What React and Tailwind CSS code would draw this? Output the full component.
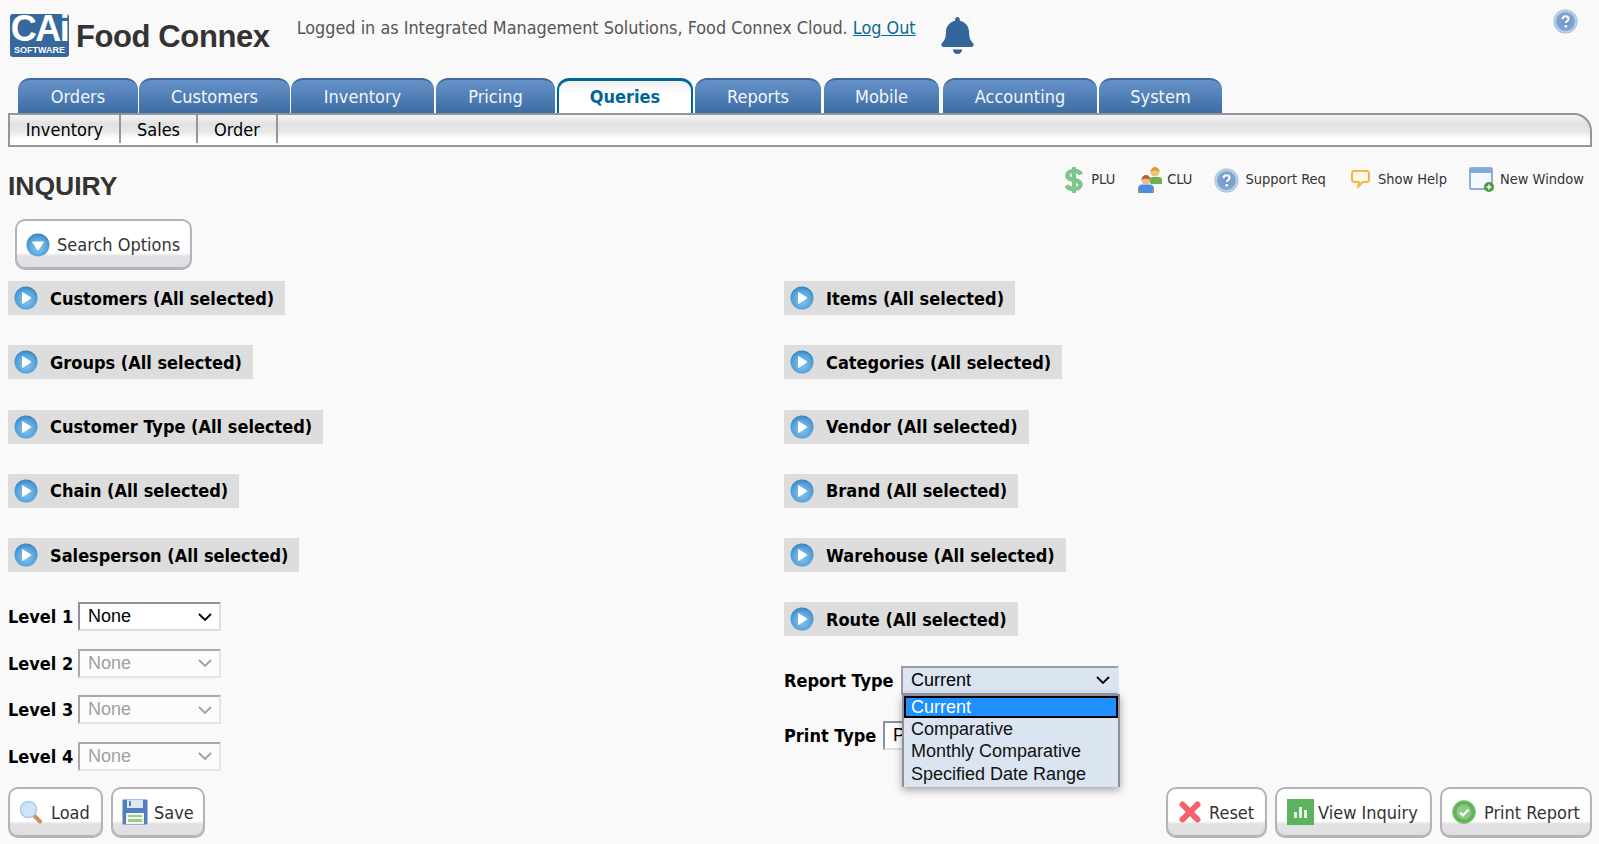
import React from 'react';
import { FaBell } from 'react-icons/fa';

const tabs = [
  { label: 'Orders', w: 'w-[120px]' },
  { label: 'Customers', w: 'ml-[1px] w-[151px]' },
  { label: 'Inventory', w: 'ml-[1px] w-[143px]' },
  { label: 'Pricing', w: 'ml-[2px] w-[119px]' },
  { label: 'Queries', w: 'ml-[2px] w-[136px]', active: true },
  { label: 'Reports', w: 'ml-[2px] w-[126px]' },
  { label: 'Mobile', w: 'ml-[3px] w-[115px]' },
  { label: 'Accounting', w: 'ml-[4px] w-[154px]' },
  { label: 'System', w: 'ml-[2px] w-[123px]' },
];

const leftFilters = ['Customers', 'Groups', 'Customer Type', 'Chain', 'Salesperson'];
const rightFilters = ['Items', 'Categories', 'Vendor', 'Brand', 'Warehouse', 'Route'];

const tahoma = "font-['DejaVu_Sans_Condensed','DejaVu_Sans',sans-serif]";

// Glossy round blue icon used by the expanders
const BlueBall = ({ size = 24, dir = 'right' }) => {
  const id = `ball-${dir}`;
  return (
    <svg width={size} height={size} viewBox="0 0 24 24" className="shrink-0">
      <defs>
        <radialGradient id={id} cx="50%" cy="60%" r="60%">
          <stop offset="0%" stopColor="#8cc8ef" />
          <stop offset="75%" stopColor="#4f9fd8" />
          <stop offset="100%" stopColor="#3b7fb5" />
        </radialGradient>
      </defs>
      <circle cx="12" cy="12" r="11.5" fill={`url(#${id})`} />
      {dir === 'right' ? (
        <path d="M8.5 6.5 L17 12 L8.5 17.5 Z" fill="#fff" stroke="#fff" strokeWidth="1" strokeLinejoin="round" />
      ) : (
        <path d="M6.5 9 L17.5 9 L12 17 Z" fill="#fff" stroke="#fff" strokeWidth="1" strokeLinejoin="round" />
      )}
    </svg>
  );
};

const HelpBall = ({ id, size = 25 }) => (
  <svg width={size} height={size} viewBox="0 0 24 24" className="shrink-0">
    <defs>
      <radialGradient id={id} cx="50%" cy="50%" r="50%">
        <stop offset="0%" stopColor="#6f97c6" />
        <stop offset="72%" stopColor="#7fa5d0" />
        <stop offset="88%" stopColor="#c6d9ee" />
        <stop offset="100%" stopColor="#8fb0d6" />
      </radialGradient>
    </defs>
    <circle cx="12" cy="12" r="11.5" fill={`url(#${id})`} />
    <path d="M9.2 9.8c0-1.7 1.3-2.8 2.9-2.8s2.8 1.100 2.8 2.500c0 2-2.600 2-2.600 3.900" fill="none" stroke="#fff" strokeWidth="2" />
    <circle cx="12.3" cy="16.600" r="1.300" fill="#fff" />
  </svg>
);

const DollarIcon = () => (
  <svg width="20" height="28" viewBox="0 0 20 28" className="shrink-0">
    <path d="M10 1v26" stroke="#7fc58c" strokeWidth="4" />
    <path d="M17 8.500c-1-2.500-3.500-3.500-7-3.500-4 0-6.500 2-6.500 4.500 0 6 13 3 13 9 0 2.500-2.500 4.500-6.500 4.500-3.500 0-6-1-7.500-3.500" fill="none" stroke="#7fc58c" strokeWidth="4.500" />
  </svg>
);

const CluIcon = () => (
  <svg width="26" height="28" viewBox="0 0 26 28" className="shrink-0">
    <path d="M12 16c0-3 1.500-5 3-5h7c2 0 3 1.500 3 3v4H14z" fill="#6fb04f" />
    <circle cx="18" cy="6" r="4.5" fill="#f0c27a" />
    <path d="M13.500 6c0-3 2-5 4.500-5s4.500 2 4.500 5c-2-2-7-2-9 0z" fill="#e39a2e" />
    <path d="M1 27v-4c0-3 2-4.500 4-4.500h8c2 0 4 1.500 4 4.500v4z" fill="#4b8de0" />
    <circle cx="9" cy="14" r="4.5" fill="#eeb98f" />
    <path d="M4.500 14c0-3 2-5 4.500-5s4.500 2 4.500 5c-2-1.800-7-1.800-9 0z" fill="#a5643c" />
    <path d="M1 27v-3h2v3zM15 27v-3h2v3z" fill="#d4833a" />
  </svg>
);

const BubbleIcon = () => (
  <svg width="21" height="22" viewBox="0 0 20 22" className="shrink-0">
    <path d="M4 2h12c1.300 0 2.500 1 2.500 2.500v6c0 1.500-1.200 2.500-2.500 2.500h-4l-4.500 5 1-5H4c-1.300 0-2.500-1-2.500-2.500v-6C1.500 3 2.700 2 4 2z" fill="#fff8e8" stroke="#f5b54a" strokeWidth="2" strokeLinejoin="round" />
  </svg>
);

const WindowIcon = () => (
  <svg width="26" height="26" viewBox="0 0 26 26" className="shrink-0">
    <rect x="1" y="1" width="22" height="21" rx="1" fill="#f4f7fc" stroke="#6c95cf" strokeWidth="1.500" />
    <rect x="1" y="1" width="22" height="5" fill="#84a8da" />
    <circle cx="20" cy="20" r="5" fill="#4c9a3c" />
    <path d="M20 17.500v5M17.500 20h5" stroke="#fff" strokeWidth="1.500" />
  </svg>
);

const SearchIcon = () => (
  <svg width="24" height="24" viewBox="0 0 24 24" className="shrink-0">
    <path d="M14.500 15 L21 21.500" stroke="#c8925a" strokeWidth="4" strokeLinecap="round" />
    <circle cx="9.500" cy="9.500" r="8" fill="#cfe4f7" stroke="#a6c8e8" strokeWidth="1.500" />
  </svg>
);

const SaveIcon = () => (
  <svg width="26" height="26" viewBox="0 0 26 26" className="shrink-0">
    <rect x="0.500" y="0.500" width="25" height="25" rx="1" fill="#4f7fc0" />
    <rect x="5" y="1" width="16" height="8" fill="#dce8f6" />
    <rect x="7" y="2" width="2" height="5" fill="#4f7fc0" />
    <rect x="4" y="14" width="18" height="11" fill="#f2f5f0" />
    <rect x="6" y="16" width="14" height="2" fill="#9bcf83" />
    <rect x="6" y="20" width="14" height="3" fill="#9bcf83" />
  </svg>
);

const ResetIcon = () => (
  <svg width="24" height="24" viewBox="0 0 24 24" className="shrink-0">
    <path d="M4.500 4.500 L19.500 19.500 M19.500 4.500 L4.500 19.500" stroke="#f4616b" strokeWidth="6" strokeLinecap="round" />
  </svg>
);

const BarsIcon = () => (
  <svg width="27" height="26" viewBox="0 0 27 26" className="shrink-0">
    <rect width="27" height="26" fill="#5cb25d" />
    <rect x="7" y="13" width="3" height="6" fill="#e6f4e6" />
    <rect x="12" y="8" width="3" height="11" fill="#e6f4e6" />
    <rect x="17" y="11" width="3" height="8" fill="#e6f4e6" />
  </svg>
);

const CheckIcon = () => (
  <svg width="24" height="24" viewBox="0 0 24 24" className="shrink-0">
    <circle cx="12" cy="12" r="11.500" fill="#62b35c" stroke="#8fce88" />
    <circle cx="12" cy="12" r="7.500" fill="#8cc985" />
    <path d="M8 12.500 L11 15.500 L16.500 9.500" fill="none" stroke="#fff" strokeWidth="2.200" />
  </svg>
);

const ChevronDown = ({ className }) => (
  <svg width="14" height="8" viewBox="0 0 14 8" className={className}>
    <path d="M1 1 L7 7 L13 1" fill="none" stroke="currentColor" strokeWidth="1.800" />
  </svg>
);

const GlossButton = ({ icon, label, className = '' }) => (
  <button
    className={`${tahoma} flex items-center rounded-[10px] border-2 border-[#b4b3bb] bg-[linear-gradient(#ffffff_0%,#ffffff_68%,#e2e2e4_74%,#e0e0e3_100%)] text-[18px] text-[#333] shadow-[inset_0_-1px_1px_rgba(0,0,0,0.2)] ${className}`}
  >
    {icon}
    <span>{label}</span>
  </button>
);

const labelFont = `${tahoma} text-[18px] font-bold text-black whitespace-nowrap`;

const Expander = ({ name }) => (
  <div className="mb-[30.3px] flex h-[34px] items-center gap-[12px] self-start bg-[#dddddd] pl-[6px] pr-[11px]">
    <BlueBall />
    <span className={labelFont}>{name} (All selected)</span>
  </div>
);

const FakeSelect = ({ value, disabled, className = '' }) => (
  <div
    className={`flex h-[29px] items-center justify-between border-2 pl-[8px] pr-[7px] font-['Liberation_Sans',sans-serif] text-[18px] font-normal ${
      disabled
        ? 'border-t-[#a9a9a9] border-l-[#a9a9a9] border-r-[#e3e3ec] border-b-[#e3e3ec] bg-[#fcfcfc] text-[#a0a0a0]'
        : 'border-t-[#8f8f9d] border-l-[#8f8f9d] border-r-[#dcdce6] border-b-[#dcdce6] bg-white text-black'
    } ${className}`}
  >
    <span>{value}</span>
    <ChevronDown className={disabled ? 'text-[#a0a0a0]' : 'text-black'} />
  </div>
);

const LevelRow = ({ n, disabled }) => (
  <div className="flex items-center">
    <span className={`w-[70px] ${labelFont}`}>Level {n}</span>
    <FakeSelect value="None" disabled={disabled} className="w-[143px]" />
  </div>
);

const ToolLink = ({ icon, label, className = '' }) => (
  <div className={`flex items-center ${className}`}>
    {icon}
    <span className={`${tahoma} text-[14.5px] text-[#333]`}>{label}</span>
  </div>
);

export default function App() {
  return (
    <div className="h-[844px] overflow-hidden bg-[#f9f9f9] pr-[7px] pl-[8px]">
      {/* Header */}
      <div className="relative flex h-[78px] items-start">
        <div className="mt-[14px] ml-[2px] flex h-[43px] w-[59px] flex-col items-center rounded-[3px] bg-[#36689d] font-['Liberation_Sans',sans-serif] font-bold text-white">
          <span className="h-[30px] text-[36px] leading-[30px] tracking-[-1.5px]">CAi</span>
          <span className="text-[9px] leading-[12px]">SOFTWARE</span>
        </div>
        <div className="mt-[18px] ml-[7px] font-['Liberation_Sans',sans-serif] text-[31px] leading-[38px] font-bold tracking-[-0.4px] text-[#333]">
          Food Connex
        </div>
        <div className={`${tahoma} mt-[16px] ml-[27px] text-[17.85px] leading-[24px] text-[#555]`}>
          Logged in as Integrated Management Solutions, Food Connex Cloud.{' '}
          <a href="#" className="text-[#0b6a94] underline">Log Out</a>
        </div>
        <div className="relative mt-[17px] ml-[23px] h-[37px] w-[40px] text-[#34659b]">
          <FaBell size={37} />
          <span className="absolute top-[-1px] right-[1px] text-[10px] font-bold text-white">0</span>
        </div>
        <div className="absolute top-[9px] right-[14px]">
          <HelpBall id="help-top" />
        </div>
      </div>

      {/* Main tabs */}
      <div className="ml-[10px] flex h-[35px]">
        {tabs.map((t) => (
          <div
            key={t.label}
            className={`${tahoma} flex ${t.w} items-center justify-center rounded-t-[12px] text-[18px] ${
              t.active
                ? 'border-x-[2px] border-t-[3px] border-[#006699] bg-[linear-gradient(#f0f0f0,#ffffff_40%)] pb-[2px] font-bold text-[#006699]'
                : 'border-t-2 border-[#3f6a9c] bg-[linear-gradient(#6592c9,#3c6da3)] text-[#f2f6fb]'
            }`}
          >
            {t.label}
          </div>
        ))}
      </div>

      {/* Sub navigation */}
      <div className={`${tahoma} flex h-[34px] rounded-tr-[18px] border-2 border-[#96959e] bg-[linear-gradient(#f6f6f6,#e1e1e2_30%,#e8e8e8_55%,#ffffff_80%)] pb-[2px] text-[18px] text-black`}>
        <div className="flex w-[111px] items-center justify-center border-r-2 border-[#96959e]">Inventory</div>
        <div className="flex w-[77px] items-center justify-center border-r-2 border-[#96959e]">Sales</div>
        <div className="flex w-[80px] items-center justify-center border-r-2 border-[#96959e]">Order</div>
      </div>

      {/* Title and tools */}
      <div className="flex h-[72px] items-start justify-between">
        <h1 className="mt-[23px] font-['Liberation_Sans',sans-serif] text-[26.5px] leading-[32px] font-bold text-[#333]">INQUIRY</h1>
        <div className="mt-[19px] mr-[8px] flex items-center">
          <ToolLink icon={<DollarIcon />} label="PLU" className="mr-[22px] gap-[7px]" />
          <ToolLink icon={<CluIcon />} label="CLU" className="mr-[22px] gap-[4px]" />
          <ToolLink icon={<HelpBall id="help-tool" />} label="Support Req" className="mr-[24px] gap-[6px]" />
          <ToolLink icon={<BubbleIcon />} label="Show Help" className="mr-[22px] gap-[7px]" />
          <ToolLink icon={<WindowIcon />} label="New Window" className="gap-[5px]" />
        </div>
      </div>

      <GlossButton
        icon={<BlueBall dir="down" />}
        label="Search Options"
        className="ml-[7px] h-[51px] w-[177px] gap-[7px] pl-[9px]"
      />

      {/* Filters */}
      <div className="mt-[11px] flex">
        <div className="flex w-[776px] flex-col">
          {leftFilters.map((f) => (
            <Expander key={f} name={f} />
          ))}
          <div className="flex flex-col gap-[17.4px]">
            <LevelRow n={1} />
            <LevelRow n={2} disabled />
            <LevelRow n={3} disabled />
            <LevelRow n={4} disabled />
          </div>
        </div>
        <div className="flex flex-col">
          {rightFilters.map((f) => (
            <Expander key={f} name={f} />
          ))}
          <div className="-mt-[1px] flex items-center">
            <span className={`w-[117px] ${labelFont}`}>Report Type</span>
            <div className="relative">
              <FakeSelect value="Current" className="w-[218px] !border-t-[#9c9ca6] !border-r-[#dbe5f1] !border-b-[#9c9ca6] !border-l-[#9c9ca6] !bg-[#dbe5f1]" />
              <div className="absolute top-[28px] left-[1px] z-10 w-[218px] border-x-2 border-t-2 border-[#8f8f9d] bg-[#dbe5f1] pb-[2px] font-['Liberation_Sans',sans-serif] text-[18px] leading-[22.300px] text-[#111] shadow-[0_3px_8px_rgba(0,0,0,0.35)]">
                <div className="border-2 border-black bg-[#1e90ff] pl-[5px] leading-[18.300px] text-white">Current</div>
                <div className="pl-[7px]">Comparative</div>
                <div className="pl-[7px]">Monthly Comparative</div>
                <div className="pl-[7px]">Specified Date Range</div>
              </div>
            </div>
          </div>
          <div className="mt-[26px] flex items-center">
            <span className={`w-[99px] ${labelFont}`}>Print Type</span>
            <FakeSelect value="PDF" className="w-[236px]" />
          </div>
        </div>
      </div>

      {/* Footer buttons */}
      <div className="mt-[16px] flex justify-between">
        <div className="flex gap-[8px]">
          <GlossButton icon={<SearchIcon />} label="Load" className="h-[51px] w-[95px] gap-[8px] pl-[9px]" />
          <GlossButton icon={<SaveIcon />} label="Save" className="h-[51px] w-[94px] gap-[6px] pl-[9px]" />
        </div>
        <div className="flex gap-[8px]">
          <GlossButton icon={<ResetIcon />} label="Reset" className="h-[51px] w-[101px] gap-[7px] pl-[10px]" />
          <GlossButton icon={<BarsIcon />} label="View Inquiry" className="h-[51px] w-[157px] gap-[4px] pl-[10px]" />
          <GlossButton icon={<CheckIcon />} label="Print Report" className="h-[51px] w-[152px] gap-[8px] pl-[10px]" />
        </div>
      </div>
    </div>
  );
}
